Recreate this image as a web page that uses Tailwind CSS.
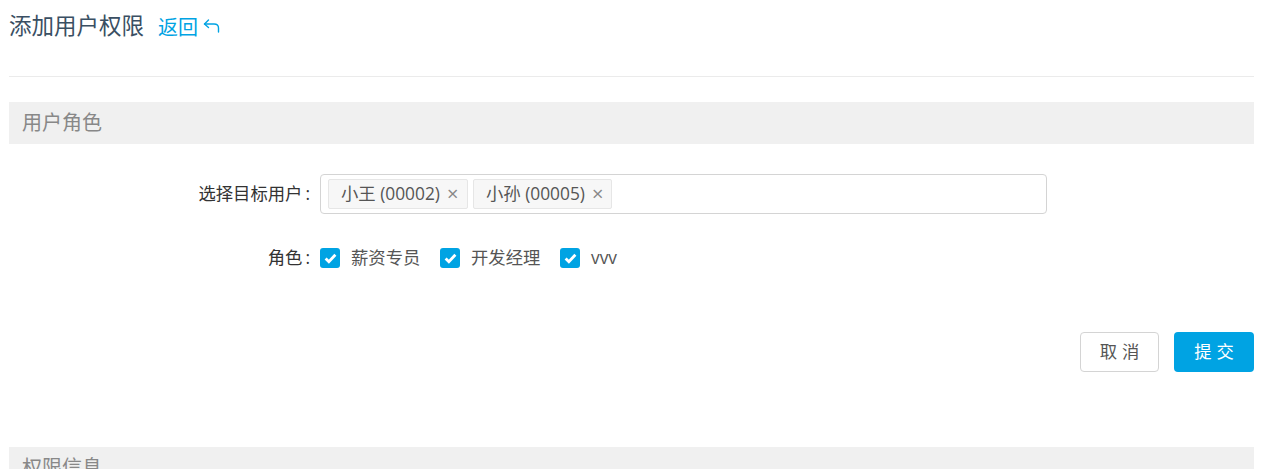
<!DOCTYPE html>
<html lang="zh-CN">
<head>
    <meta charset="UTF-8">
    <title>添加用户权限</title>
    <script src="https://cdn.jsdelivr.net/npm/@tailwindcss/browser@4"></script>
</head>
<body class="bg-white h-[469px] overflow-hidden font-['Open_Sans','Noto_Sans_CJK_SC',sans-serif]">
    <div class="pl-[9px] pr-5">

        <div class="flex items-center h-[54px]">
            <h1 class="text-[22.5px] mb-[2px] leading-[30px] text-[#3a4f63]">添加用户权限</h1>
            <a href="#" class="ml-[14px] pt-[2px] flex items-center text-[20px] text-[#00a3e3]">
                返回
                <svg class="ml-[5px] mb-[2px]" width="18" height="18" viewBox="0 0 18 18" fill="none" stroke="#00a3e3" stroke-width="1.4" stroke-linecap="round" stroke-linejoin="round">
                    <path d="M5.5 2 L1.5 6 L5.5 9.5"/>
                    <path d="M1.5 6 H11 Q15.5 6 15.5 10 V14"/>
                </svg>
            </a>
        </div>

        <div class="mt-[22px] border-t border-[#ebebeb]"></div>

        <div class="mt-[25px] h-[42px] bg-[#f0f0f0] pl-[13px] text-[20px] leading-[42px] text-[#888888]">用户角色</div>

        <div class="mt-[30px] flex items-center h-10">
            <label class="w-[302px] pr-[1px] text-right text-[17.33px] text-[#333333]">选择目标用户<span class="ml-[3px]">:</span></label>
            <div class="ml-[9px] flex items-center gap-[5px] w-[727px] h-10 pl-[7px] border border-[#d4d4d4] rounded-[4px]">
                <span class="flex items-center h-[30px] w-[140px] pl-[12px] bg-[#f7f7f7] border border-[#e6e6e6] rounded-[2px] text-[17.33px] text-[#555555] whitespace-nowrap">
                    小王 (00002)<span class="ml-[7px] text-[20px] leading-[20px] text-[#888888]">×</span>
                </span>
                <span class="flex items-center h-[30px] w-[139px] pl-[12px] bg-[#f7f7f7] border border-[#e6e6e6] rounded-[2px] text-[17.33px] text-[#555555] whitespace-nowrap">
                    小孙 (00005)<span class="ml-[7px] text-[20px] leading-[20px] text-[#888888]">×</span>
                </span>
            </div>
        </div>

        <div class="mt-[34px] flex items-center h-5">
            <label class="w-[302px] pr-[1px] text-right text-[17.33px] text-[#333333]">角色<span class="ml-[3px]">:</span></label>
            <div class="ml-[9px] flex items-center text-[17.33px] text-[#555555] whitespace-nowrap">
                <span class="flex items-center justify-center w-5 h-5 bg-[#00a3e3] rounded-[3px]">
                    <svg width="13" height="11" viewBox="0 0 12 10" fill="none" stroke="#ffffff" stroke-width="2.6"><path d="M1.5 5 L4.5 8 L10.5 1.5"/></svg>
                </span>
                <span class="ml-[11px] w-[69px]">薪资专员</span>
                <span class="ml-[20px] flex items-center justify-center w-5 h-5 bg-[#00a3e3] rounded-[3px]">
                    <svg width="13" height="11" viewBox="0 0 12 10" fill="none" stroke="#ffffff" stroke-width="2.6"><path d="M1.5 5 L4.5 8 L10.5 1.5"/></svg>
                </span>
                <span class="ml-[11px] w-[69px]">开发经理</span>
                <span class="ml-[20px] flex items-center justify-center w-5 h-5 bg-[#00a3e3] rounded-[3px]">
                    <svg width="13" height="11" viewBox="0 0 12 10" fill="none" stroke="#ffffff" stroke-width="2.6"><path d="M1.5 5 L4.5 8 L10.5 1.5"/></svg>
                </span>
                <span class="ml-[11px]">vvv</span>
            </div>
        </div>

        <div class="mt-[64px] flex justify-end gap-[15px]">
            <button class="w-[79px] h-10 pl-[5px] border border-[#d4d4d4] rounded-[4px] bg-white text-[17.33px] tracking-[5px] text-[#555555]">取消</button>
            <button class="w-[80px] h-10 pl-[5px] rounded-[4px] bg-[#00a3e3] text-[17.33px] tracking-[5px] text-white">提交</button>
        </div>

        <div class="mt-[75px] h-[42px] bg-[#f0f0f0] pl-[13px] text-[20px] leading-[42px] text-[#888888]">权限信息</div>
    </div>
</body>
</html>
